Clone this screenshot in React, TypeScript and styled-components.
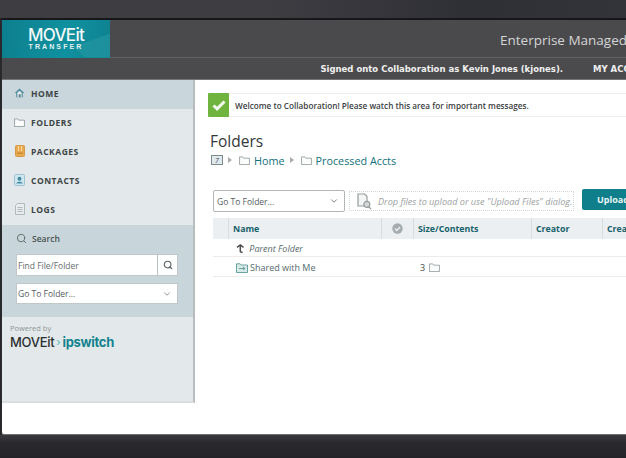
import React from 'react';
import styled, { createGlobalStyle } from 'styled-components';
import { ChevronDown, Search } from 'lucide-react';

const GlobalStyle = createGlobalStyle`
  html, body {
    margin: 0;
    padding: 0;
    width: 626px;
    height: 458px;
    overflow: hidden;
    background: #2b2b2f;
    font-family: "Open Sans", "Liberation Sans", sans-serif;
  }
  * { box-sizing: border-box; }
`;

function FolderIcon({ size = 12 }: { size?: number }) {
  return (
    <svg width={size} height={size - 2} viewBox="0 0 12 10" fill="#fbfcfc" stroke="#7f8a8c" strokeWidth="0.8">
      <path d="M.5 9.5V1h3.6l1 1.4h6.4v7.1z" />
    </svg>
  );
}

function HomeIcon() {
  return (
    <svg width="13" height="12" viewBox="0 0 13 12">
      <path d="M6.5.8.8 6h1.8v5h7.8V6h1.8z" fill="#4f8ea0" />
      <path d="M4 6.5a2.5 2.5 0 0 1 5 0v4.5H4z" fill="#e8eef0" />
      <rect x="5.5" y="7.5" width="2.4" height="3.5" fill="#5b7f8c" />
    </svg>
  );
}

function PackageIcon() {
  return (
    <svg width="10" height="12" viewBox="0 0 10 12">
      <rect width="9" height="11" x=".5" y=".5" rx="1" fill="#e9aa4f" stroke="#d39a4c" />
      <path d="M3.5 1v5M6.5 1v5" stroke="#f8dca8" />
      <rect x="2" y="7.5" width="6" height="1.5" fill="#c98a36" />
    </svg>
  );
}

function ContactIcon() {
  return (
    <svg width="11" height="12" viewBox="0 0 11 12">
      <rect x=".5" y=".5" width="10" height="11" rx="1" fill="#cfe6ee" stroke="#9cc5d2" />
      <circle cx="5.5" cy="4.7" r="2" fill="#3f8ba4" />
      <path d="M2.3 9.6c.4-2.4 6-2.4 6.4 0z" fill="#3f8ba4" />
    </svg>
  );
}

function LogIcon() {
  return (
    <svg width="10" height="12" viewBox="0 0 10 12" fill="#e7ecec" stroke="#a5adae" strokeWidth="0.8">
      <path d="M2.5.5h7v11h-9V2.5z" />
      <path d="M2.5 4.5h5M2.5 6.5h5M2.5 8.5h5" />
    </svg>
  );
}

function DropIcon() {
  return (
    <svg width="15" height="17" viewBox="0 0 15 17" fill="#f4f5f5" stroke="#989d9f" strokeWidth="1.2">
      <path d="M1 1h6.5L10 3.6V13H1z" />
      <circle cx="9.8" cy="11.4" r="3" fill="#d5d8d9" />
      <path d="M11.8 13.6 14 16" />
    </svg>
  );
}

function CheckCircle() {
  return (
    <svg width="11" height="11" viewBox="0 0 11 11">
      <circle cx="5.5" cy="5.5" r="5.2" fill="#a4acaf" />
      <path d="m3 5.6 1.8 1.8L8 4" fill="none" stroke="#eef1f2" strokeWidth="1.4" />
    </svg>
  );
}

function UpArrow() {
  return (
    <svg width="9" height="9" viewBox="0 0 9 9" fill="none" stroke="#4a4f50" strokeWidth="1.5">
      <path d="M1 3.4 4.3 1l3.2 2.4M4.3 1v6.2c0 .8.5 1 2.3 1" />
    </svg>
  );
}

function SharedIcon() {
  return (
    <svg width="12" height="10" viewBox="0 0 12 10" fill="#d7eae8" stroke="#5c9a98" strokeWidth="0.9">
      <path d="M.5 9.5V.8h3.6l1 1.2h6.4v7.5z" />
      <path d="M3 5.5h6M7 4l2 1.5L7 7" />
    </svg>
  );
}

const Frame = styled.div`
  width: 626px;
  height: 458px;
  display: flex;
  flex-direction: column;
  background: #27272b;
`;

const TopGlow = styled.div`
  height: 18px;
  flex-shrink: 0;
  background: linear-gradient(90deg, #3e3e42 0%, #3c3c41 45%, #2f2f36 75%, #33333a 100%);
`;

const Screen = styled.div`
  height: 417px;
  flex-shrink: 0;
  margin-left: 1px;
  display: flex;
  flex-direction: column;
  background: #fff;
  border-top: 2px solid #17171a;
  border-left: 1px solid #2c2c2e;
  border-bottom: 1px solid #6f7073;
  border-bottom-left-radius: 3px;
`;

const Banner = styled.header`
  height: 38px;
  flex-shrink: 0;
  display: flex;
  justify-content: space-between;
  align-items: center;
  background: #4a4a4c;
  border-bottom: 1px solid #626264;
`;

const Logo = styled.div`
  position: relative;
  overflow: hidden;
  width: 108px;
  height: 38px;
  display: flex;
  flex-direction: column;
  align-items: center;
  padding: 8px 0 0 0;
  background: linear-gradient(100deg, #0d7f8e 0%, #10919f 60%, #0e8190 100%);
`;

const LogoMark = styled.div`
  position: absolute;
  right: 0;
  bottom: 0;
  width: 36px;
  height: 24px;
  background: #2a9aa5;
  opacity: 0.55;
  clip-path: polygon(100% 0, 100% 100%, 30% 100%, 0 55%);
`;

const LogoTitle = styled.div`
  position: relative;
  font-family: "Inter", "Liberation Sans", sans-serif;
  font-size: 17px;
  line-height: 14px;
  font-weight: 500;
  letter-spacing: -0.7px;
  color: #f2f8f8;
`;

const LogoSub = styled.div`
  position: relative;
  margin-top: 1px;
  font-family: "Liberation Sans", sans-serif;
  font-size: 7px;
  line-height: 7px;
  font-weight: 700;
  letter-spacing: 2.1px;
  color: #e4f1f2;
`;

const BannerTitle = styled.div`
  font-size: 13.5px;
  color: #d4d5d6;
  white-space: nowrap;
  margin-right: -1px;
  margin-top: 2px;
`;

const UserBar = styled.div`
  height: 22px;
  flex-shrink: 0;
  display: flex;
  justify-content: flex-end;
  align-items: center;
  gap: 30px;
  overflow: hidden;
  background: #4b4b4d;
  border-bottom: 1px solid #757577;
  color: #f0f0f0;
  font-family: "DejaVu Sans", "Open Sans", sans-serif;
  font-size: 8.5px;
  font-weight: 700;
  white-space: nowrap;
`;

const AccountLink = styled.span`
  width: 33px;
  overflow: hidden;
`;

const Body = styled.div`
  flex: 1;
  display: flex;
  min-height: 0;
`;

const Sidebar = styled.aside`
  width: 193px;
  height: 323px;
  flex-shrink: 0;
  display: flex;
  flex-direction: column;
  background: #e3e9ea;
  border-right: 2px solid #b8bcbd;
  border-bottom: 2px solid #dadddd;
`;

const NavItem = styled.div<{ $active?: boolean }>`
  height: 29px;
  display: flex;
  align-items: center;
  gap: 6px;
  padding: 0 0 3px 12px;
  background: ${(p) => (p.$active ? '#c9d6db' : 'transparent')};
  color: #3d4446;
  font-size: 8.5px;
  font-weight: 700;
  letter-spacing: 0.5px;
`;

const NavIconBox = styled.span`
  width: 11px;
  display: flex;
  justify-content: center;
`;

const SearchPanel = styled.div`
  height: 92px;
  display: flex;
  flex-direction: column;
  padding: 0 15px 0 14px;
  background: #c8d5da;
`;

const SearchTitle = styled.div`
  height: 29px;
  display: flex;
  align-items: center;
  gap: 5px;
  padding-bottom: 2px;
  color: #4a5254;
  font-size: 8.5px;
  font-weight: 600;
`;

const SearchField = styled.div`
  height: 22px;
  display: flex;
  background: #fff;
  border: 1px solid #c0c8ca;
  color: #666c6e;
  font-size: 8.5px;
`;

const SearchText = styled.div`
  flex: 1;
  display: flex;
  align-items: center;
  padding-left: 1px;
  border-right: 1px solid #b9c2c5;
`;

const SearchButton = styled.div`
  width: 19px;
  display: flex;
  align-items: center;
  justify-content: center;
  color: #556064;
`;

const SelectBox = styled.div<{ $width: number; $height: number; $strong?: boolean }>`
  width: ${(p) => p.$width}px;
  height: ${(p) => p.$height}px;
  flex-shrink: 0;
  display: flex;
  align-items: center;
  justify-content: space-between;
  padding: 0 5px 0 3px;
  background: #fff;
  border: 1px solid ${(p) => (p.$strong ? '#b1b6b8' : '#c0c8ca')};
  border-radius: ${(p) => (p.$strong ? 2 : 0)}px;
  color: #565c5e;
  font-size: 8.5px;
`;

const SidebarSelect = styled(SelectBox)`
  margin-top: 7px;
  padding-left: 1px;
`;

const Powered = styled.div`
  flex: 1;
  padding: 6px 0 0 8px;
`;

const PoweredLabel = styled.div`
  font-size: 7.5px;
  line-height: 10px;
  color: #8d9496;
`;

const PoweredBrand = styled.div`
  display: flex;
  align-items: center;
  gap: 2px;
  margin-top: 1px;
  font-family: "Inter", "Liberation Sans", sans-serif;
  font-size: 13px;
  line-height: 16px;
  font-weight: 500;
  letter-spacing: -0.3px;
  color: #2b2f30;
`;

const BrandAccent = styled.span`
  color: #12838f;
  font-weight: 700;
`;

const BrandArrow = styled.span`
  color: #63c0c8;
  font-size: 11px;
`;

const Main = styled.main`
  flex: 1;
  min-width: 0;
  overflow: hidden;
  padding: 13px 0 0 13px;
`;

const Notice = styled.div`
  width: 440px;
  height: 24px;
  display: flex;
  align-items: center;
  gap: 6px;
  border-top: 1px solid #eceeee;
  border-bottom: 1px solid #eceeee;
  color: #3c4042;
  font-size: 8.2px;
  font-weight: 600;
  white-space: nowrap;
`;

const NoticeIcon = styled.div`
  width: 21px;
  height: 24px;
  display: flex;
  align-items: center;
  justify-content: center;
  background: #6eb43f;
  border-radius: 1px;
`;

const Title = styled.h1`
  margin: 14px 0 0 2px;
  font-size: 15.5px;
  line-height: 20px;
  font-weight: 500;
  color: #34383a;
`;

const Crumbs = styled.div`
  display: flex;
  align-items: center;
  gap: 4px;
  height: 16px;
  margin: 1px 0 0 3px;
  color: #14727c;
  font-size: 10.8px;
  font-weight: 500;
`;

const CountBadge = styled.span`
  width: 12px;
  height: 10px;
  display: flex;
  align-items: center;
  justify-content: center;
  background: #dfe9ee;
  border: 1px solid #7f8a8c;
  color: #3f4a4c;
  font-size: 7px;
  font-style: italic;
`;

const CrumbArrow = styled.span`
  width: 0;
  height: 0;
  margin: 0 3px 0 1px;
  border-left: 4px solid #a8adaf;
  border-top: 3px solid transparent;
  border-bottom: 3px solid transparent;
`;

const Toolbar = styled.div`
  display: flex;
  align-items: center;
  height: 22px;
  margin: 22px 0 0 5px;
`;

const DropZone = styled.div`
  width: 225px;
  height: 20px;
  flex-shrink: 0;
  display: flex;
  align-items: center;
  gap: 6px;
  margin-left: 4px;
  padding-left: 7px;
  border: 1px dotted #d4d7d8;
  color: #9b9fa1;
  font-size: 9.1px;
  font-style: italic;
  white-space: nowrap;
`;

const UploadButton = styled.div`
  width: 60px;
  height: 21px;
  flex-shrink: 0;
  align-self: flex-start;
  margin: -1px 0 0 8px;
  padding-left: 15px;
  display: flex;
  align-items: center;
  background: #0f7f8b;
  border-radius: 2px 0 0 2px;
  color: #eaf5f6;
  font-size: 9px;
  font-weight: 700;
`;

const Table = styled.div`
  width: 430px;
  margin: 6px 0 0 5px;
`;

const HeadRow = styled.div`
  height: 21px;
  display: grid;
  grid-template-columns: 16px 153px 32px 118px 71px 1fr;
  background: #eceff1;
  color: #15616c;
  font-size: 8.8px;
  font-weight: 700;
`;

const HeadCell = styled.div`
  display: flex;
  align-items: center;
  padding-left: 4px;
  border-right: 1px solid #d8dddf;
  white-space: nowrap;
  overflow: hidden;
`;

const HeadCheck = styled(HeadCell)`
  justify-content: center;
  padding-left: 0;
`;

const Row = styled.div<{ $height: number }>`
  height: ${(p) => p.$height}px;
  display: grid;
  grid-template-columns: 201px 1fr;
  align-items: center;
  padding-top: 2px;
  border-bottom: 1px solid #ececec;
  color: #556a6d;
  font-size: 9px;
`;

const NameCell = styled.div<{ $italic?: boolean }>`
  display: flex;
  align-items: center;
  gap: 2px;
  padding-left: 23px;
  font-style: ${(p) => (p.$italic ? 'italic' : 'normal')};
`;

const SizeCell = styled.div`
  display: flex;
  align-items: center;
  gap: 4px;
  padding-left: 6px;
  color: #444a4c;
`;

const BottomBar = styled.div`
  flex: 1;
  background: linear-gradient(180deg, #3a3a3e 0%, #2a2a2e 35%, #242428 100%);
`;

export default function App() {
  return (
    <Frame>
      <GlobalStyle />
      <TopGlow />
      <Screen>
        <Banner>
          <Logo>
            <LogoMark />
            <LogoTitle>MOVEit</LogoTitle>
            <LogoSub>TRANSFER</LogoSub>
          </Logo>
          <BannerTitle>Enterprise Managed</BannerTitle>
        </Banner>
        <UserBar>
          <span>Signed onto Collaboration as Kevin Jones (kjones).</span>
          <AccountLink>MY ACCOUNT</AccountLink>
        </UserBar>
        <Body>
          <Sidebar>
            <NavItem $active>
              <NavIconBox><HomeIcon /></NavIconBox>
              HOME
            </NavItem>
            <NavItem>
              <NavIconBox><FolderIcon size={11} /></NavIconBox>
              FOLDERS
            </NavItem>
            <NavItem>
              <NavIconBox><PackageIcon /></NavIconBox>
              PACKAGES
            </NavItem>
            <NavItem>
              <NavIconBox><ContactIcon /></NavIconBox>
              CONTACTS
            </NavItem>
            <NavItem>
              <NavIconBox><LogIcon /></NavIconBox>
              LOGS
            </NavItem>
            <SearchPanel>
              <SearchTitle>
                <Search size={11} color="#5d6769" strokeWidth={2} />
                Search
              </SearchTitle>
              <SearchField>
                <SearchText>Find File/Folder</SearchText>
                <SearchButton><Search size={10} strokeWidth={2.6} /></SearchButton>
              </SearchField>
              <SidebarSelect $width={162} $height={21}>
                Go To Folder...
                <ChevronDown size={10} color="#7d8486" />
              </SidebarSelect>
            </SearchPanel>
            <Powered>
              <PoweredLabel>Powered by</PoweredLabel>
              <PoweredBrand>
                MOVEit
                <BrandArrow>›</BrandArrow>
                <BrandAccent>ipswitch</BrandAccent>
              </PoweredBrand>
            </Powered>
          </Sidebar>
          <Main>
            <Notice>
              <NoticeIcon>
                <svg width="14" height="11" viewBox="0 0 14 11" fill="none" stroke="#f4f9ef" strokeWidth="3">
                  <path d="m1.5 5.5 3.6 3.4L12.5 1.5" />
                </svg>
              </NoticeIcon>
              Welcome to Collaboration! Please watch this area for important messages.
            </Notice>
            <Title>Folders</Title>
            <Crumbs>
              <CountBadge>7</CountBadge>
              <CrumbArrow />
              <FolderIcon size={11} />
              Home
              <CrumbArrow />
              <FolderIcon size={11} />
              Processed Accts
            </Crumbs>
            <Toolbar>
              <SelectBox $width={132} $height={22} $strong>
                Go To Folder...
                <ChevronDown size={10} color="#666c6e" />
              </SelectBox>
              <DropZone>
                <DropIcon />
                Drop files to upload or use "Upload Files" dialog.
              </DropZone>
              <UploadButton>Upload</UploadButton>
            </Toolbar>
            <Table>
              <HeadRow>
                <HeadCell />
                <HeadCell>Name</HeadCell>
                <HeadCheck><CheckCircle /></HeadCheck>
                <HeadCell>Size/Contents</HeadCell>
                <HeadCell>Creator</HeadCell>
                <HeadCell>Created</HeadCell>
              </HeadRow>
              <Row $height={18}>
                <NameCell $italic>
                  <UpArrow />
                  <span>&nbsp;Parent Folder</span>
                </NameCell>
              </Row>
              <Row $height={20}>
                <NameCell>
                  <SharedIcon />
                  <span>Shared with Me</span>
                </NameCell>
                <SizeCell>
                  3
                  <FolderIcon size={11} />
                </SizeCell>
              </Row>
            </Table>
          </Main>
        </Body>
      </Screen>
      <BottomBar />
    </Frame>
  );
}
